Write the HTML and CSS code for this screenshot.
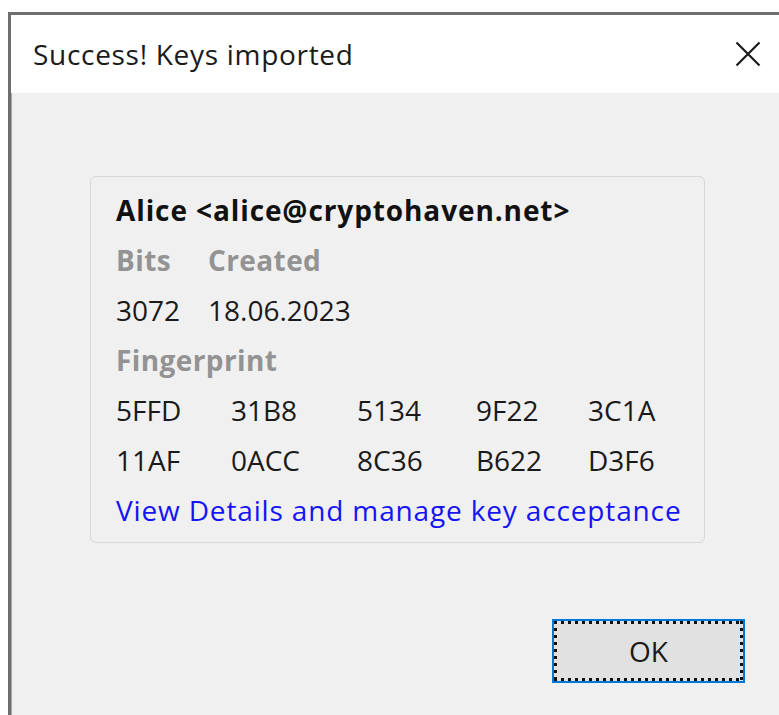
FILE: index.html
```html
<!DOCTYPE html>
<html lang="en">
<head>
<meta charset="utf-8">
<title>Success! Keys imported</title>
<link rel="stylesheet" href="styles.css">
</head>
<body>
<div class="window">
  <div class="titlebar">
    <span class="title">Success! Keys imported</span>
    <button class="close" aria-label="Close">
      <svg width="26" height="26" viewBox="0 0 26 26"><path d="M1.5 1.5 L24.5 24.5 M24.5 1.5 L1.5 24.5" stroke="#1a1a1a" stroke-width="2.2" fill="none"/></svg>
    </button>
  </div>
  <div class="content">
    <div class="keycard">
      <div class="row uid">Alice &lt;alice@cryptohaven.net&gt;</div>
      <div class="meta">
        <span class="label">Bits</span><span class="label">Created</span>
        <span>3072</span><span>18.06.2023</span>
      </div>
      <div class="row label">Fingerprint</div>
      <div class="fpr">
        <span>5FFD</span><span>31B8</span><span>5134</span><span>9F22</span><span>3C1A</span>
        <span>11AF</span><span>0ACC</span><span>8C36</span><span>B622</span><span>D3F6</span>
      </div>
      <a class="row link" href="#">View Details and manage key acceptance</a>
    </div>
    <div class="actions">
      <button class="ok"><span class="focus">OK</span></button>
    </div>
  </div>
</div>
</body>
</html>
```
FILE: styles.css
```css
html, body {
  margin: 0;
  padding: 0;
  overflow: hidden;
  background: #ffffff;
}

body {
  font-family: "Open Sans", "Noto Sans", sans-serif;
  font-size: 28px;
  letter-spacing: 0.85px;
  color: #1a1a1a;
  width: 779px;
  height: 715px;
}

/* dialog frame; its right and bottom edges run past the visible area */
.window {
  box-sizing: border-box;
  margin: 12px 0 0 8px;
  width: 771px;
  height: 703px;
  border: 3px solid #6e6e6e;
  border-right: 0;
  border-bottom: 0;
  box-shadow: inset 1px 1px 0 #a8a8a8;
  background: #f0f0f0;
  display: flex;
  flex-direction: column;
}

.titlebar {
  height: 78px;
  background: #ffffff;
  display: flex;
  align-items: center;
  justify-content: space-between;
  padding-left: 22px;
}

.title {
  letter-spacing: 0.7px;
  color: #1a1a1a;
}

.close {
  width: 40px;
  height: 40px;
  margin-right: 11px;
  padding: 0;
  border: 0;
  background: transparent;
  display: flex;
  align-items: center;
  justify-content: center;
}

.content {
  display: flex;
  flex-direction: column;
  align-items: flex-start;
}

.keycard {
  box-sizing: border-box;
  width: 615px;
  margin: 83px 0 0 79px;
  padding: 8px 20px 7px 25px;
  border: 1px solid #d7d7d7;
  border-radius: 6px;
  line-height: 50px;
  display: flex;
  flex-direction: column;
}

.uid {
  font-weight: 700;
  letter-spacing: 0.9px;
  color: #111111;
}

.label {
  font-weight: 700;
  letter-spacing: 0.4px;
  color: #939393;
}

.meta {
  display: grid;
  grid-template-columns: 92px auto;
  letter-spacing: 0;
}

.fpr {
  display: grid;
  grid-template-columns: 115px 126px 119px 112px auto;
  letter-spacing: 0;
}

.link {
  color: #1414f5;
  text-decoration: none;
}

.actions {
  align-self: stretch;
  display: flex;
  justify-content: flex-end;
  margin-top: 76px;
  padding-right: 34px;
}

.ok {
  box-sizing: border-box;
  width: 193px;
  height: 64px;
  padding: 0;
  border: 2px solid #0078d7;
  background: #e1e1e1;
  font-family: inherit;
  font-size: 28px;
  color: #1a1a1a;
  display: flex;
}

/* keyboard focus rectangle: square dots along each edge */
.focus {
  flex: 1;
  display: flex;
  align-items: center;
  justify-content: center;
  background:
    repeating-linear-gradient(to right, #111 0 3px, transparent 3px 7px) top left / 100% 3px no-repeat,
    repeating-linear-gradient(to right, #111 0 3px, transparent 3px 7px) bottom left / 100% 3px no-repeat,
    repeating-linear-gradient(to bottom, #111 0 3px, transparent 3px 7px) top left / 3px 100% no-repeat,
    repeating-linear-gradient(to bottom, #111 0 3px, transparent 3px 7px) top right / 3px 100% no-repeat;
}
```
